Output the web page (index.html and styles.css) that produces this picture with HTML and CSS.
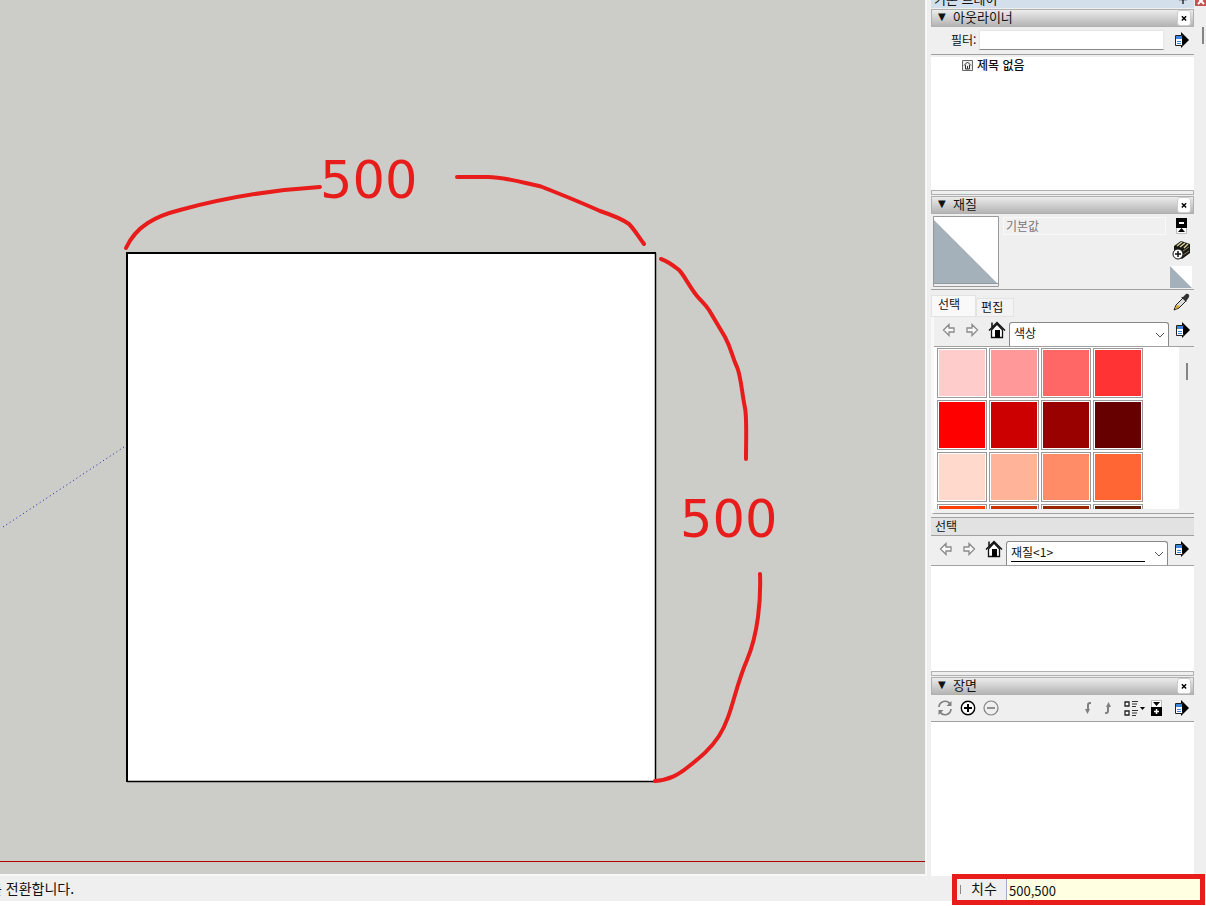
FILE: index.html
```html
<!DOCTYPE html>
<html lang="ko">
<head>
  <meta charset="UTF-8">
  <title>제목 없음</title>
  <meta name="viewport" content="width=device-width, initial-scale=1">
  <link rel="stylesheet" href="styles.css">
</head>
<body>
  <!-- Shared icons -->
  <svg class="defs" width="0" height="0" aria-hidden="true">
    <symbol id="i-menu" viewBox="0 0 15 16">
      <path d="M7 0v16l8-8z" fill="#000"/>
      <path d="M1.500 3.500h7v10h-7z" fill="#fff" stroke="#222"/>
      <path d="M2 4h6v3H2z" fill="#3d84dc"/>
      <path d="M3 9.500h4M3 11.500h4" stroke="#3d84dc"/>
      <path d="M8 4h3v8H8z" fill="#000"/>
    </symbol>
    <symbol id="i-back" viewBox="0 0 14 14">
      <path d="M1.500 7L7 1.500V5h5v4H7v3.500z" fill="#fafafa" stroke="#8a8a8a" stroke-width="1.300"/>
    </symbol>
    <symbol id="i-next" viewBox="0 0 14 14">
      <path d="M12.500 7L7 1.500V5H2v4h5v3.500z" fill="#fafafa" stroke="#8a8a8a" stroke-width="1.300"/>
    </symbol>
    <symbol id="i-home" viewBox="0 0 18 18">
      <path d="M3.500 9v7.500h11V9L9 3z" fill="#fff" stroke="#111" stroke-width="1.300"/>
      <path d="M1 9.500L9 1.500l8 8M4 6V1.500" fill="none" stroke="#111" stroke-width="1.500"/>
      <path d="M7 9h5v8H7z" fill="#000"/>
    </symbol>
    <symbol id="i-close" viewBox="0 0 14 14">
      <path d="M4.500 5l5 5M9.500 5l-5 5" stroke="#000" stroke-width="1.700"/>
    </symbol>
    <symbol id="i-down" viewBox="0 0 10 6">
      <path d="M1 1l4 4 4-4" fill="none" stroke="#555"/>
    </symbol>
  </svg>

  <div class="app">
    <!-- Modelling area -->
    <main class="viewport">
      <svg class="scene" viewBox="0 0 925 874" preserveAspectRatio="xMinYMin meet">
        <path class="red-axis" d="M0 861.500H925"/>
        <path class="blue-axis" d="M3 527L124 447"/>
        <path d="M127 253H655V781H127z" fill="#fff"/>
        <path class="edge" d="M127 782V253H656"/>
        <path class="edge thin" d="M655.500 253V781.500H127"/>
        <g class="pen">
          <path d="M126 248C136 226 156 216 180 210C224 198 270 190 320 187"/>
          <path d="M457 177H488C505 177 520 182 541 186.500C560 194 580 202 600 211C612 215 622 219 629 224C634 229 638 236 644 244"/>
          <path d="M661 259C667 261 674 266 679 270C684 275 689 286 697 296C702 302 705 304 709 310L725 337C732 350 732 357 737 367C741 376 742 394 745 408C747 418 746 439 746 459"/>
          <path d="M760 574C761 600 758 634 747 660C734 690 732 716 719 736C710 750 698 759 688 767C678 775 669 780 655 781"/>
        </g>
        <g class="note">
          <text x="320" y="198">500</text>
          <text x="680" y="537">500</text>
        </g>
      </svg>
    </main>

    <!-- Default tray -->
    <aside class="tray">
      <div class="tray-title">
        <span>기본 트레이</span>
        <svg width="8" height="12" viewBox="0 0 8 12"><path d="M2 1h4v6M2 1v6M0 7.500h8M4 8v4M5.500 1v6" fill="none" stroke="#111" stroke-width="1.300"/></svg>
      </div>

      <section class="outliner">
        <h2 class="bar"><span class="tri">▼</span>아웃라이너
          <button class="close" aria-label="닫기"><svg width="14" height="14"><use href="#i-close"/></svg></button></h2>
        <div class="filter">
          <label for="filter">필터:</label>
          <input id="filter" type="text">
          <button class="icon" aria-label="세부 정보"><svg width="15" height="16"><use href="#i-menu"/></svg></button>
        </div>
        <div class="tree">
          <svg width="11" height="11" viewBox="0 0 11 11"><path d="M.5.5h10v10H.500z" fill="#eee" stroke="#666"/><path d="M2 5.500L5.500 2 9 5.500M3.500 5v4h4V5" fill="none" stroke="#333"/><path d="M5 6h1v3H5z" fill="#333"/></svg>
          <b>제목 없음</b>
        </div>
      </section>
      <div class="splitter"></div>

      <section class="materials">
        <h2 class="bar"><span class="tri">▼</span>재질
          <button class="close" aria-label="닫기"><svg width="14" height="14"><use href="#i-close"/></svg></button></h2>
        <div class="current">
          <svg class="preview" width="66" height="71" viewBox="0 0 66 71"><path d="M.5.500h65v70H.500z" fill="#efefef" stroke="#999"/><path d="M1 1h64v66H1z" fill="#fff"/><path d="M1 4L64 67H1z" fill="#a5b1ba"/><path d="M1 67.500h64" stroke="#8d989f"/></svg>
          <input class="name" type="text" value="기본값" aria-label="재질 이름" disabled>
          <div class="side">
            <button class="icon" aria-label="보조 창 표시"><svg width="11" height="16" viewBox="0 0 11 16"><path d="M.5.500h10v15H.500z" fill="#fff" stroke="#bbb"/><path d="M0 0h11v10H0z"/><path d="M3 4h5v2H3z" fill="#fff"/><path d="M2 14l3.500-4L9 14z"/></svg></button>
            <button class="icon" aria-label="재질 만들기"><svg width="19" height="20" viewBox="0 0 19 20"><path d="M2 6l7-5 9 3v9l-8 6-8-4z" fill="#191912"/><path d="M5 6l5-4M8 7l5-4M12 8l4-4" stroke="#d8d2a0" stroke-width="1.500"/><path d="M11 11l6-4M11 15l6-4" stroke="#827c62"/><circle cx="6" cy="14" r="5" fill="#fff" stroke="#111"/><path d="M3 14h6M6 11v6" stroke="#111" stroke-width="1.500"/></svg></button>
            <button class="icon" aria-label="기본 재질"><svg width="22" height="22" viewBox="0 0 22 22"><path d="M0 0h22v22H0z" fill="#fff"/><path d="M0 0l22 22H0z" fill="#a5b1ba"/></svg></button>
          </div>
        </div>
        <div class="tabs">
          <button class="tab active">선택</button>
          <button class="tab">편집</button>
          <button class="icon dropper" aria-label="샘플 페인트"><svg width="17" height="18" viewBox="0 0 17 18"><path d="M1 17l2-5 7-7 3 3-7 7z" fill="#ddd" stroke="#222"/><path d="M2 16l2-4 3 1-2 2z" fill="#d8a628"/><path d="M8 4l5 5 1-2 2-3c1-2-1-4-3-3l-3 3z" fill="#333"/></svg></button>
        </div>
        <div class="picker">
          <div class="tools">
            <button class="icon" aria-label="뒤로"><svg width="14" height="14"><use href="#i-back"/></svg></button>
            <button class="icon" aria-label="앞으로"><svg width="14" height="14"><use href="#i-next"/></svg></button>
            <button class="icon" aria-label="모델 내"><svg width="18" height="18"><use href="#i-home"/></svg></button>
            <div class="combo">
              <select aria-label="재질 모음"><option>색상</option></select>
              <svg width="10" height="6"><use href="#i-down"/></svg>
            </div>
            <button class="icon" aria-label="세부 정보"><svg width="15" height="16"><use href="#i-menu"/></svg></button>
          </div>
          <div class="swatches">
            <div class="grid" id="grid"></div>
            <div class="scroll"></div>
          </div>
        </div>
        <h3 class="sub">선택</h3>
        <div class="tools second">
          <button class="icon" aria-label="뒤로"><svg width="14" height="14"><use href="#i-back"/></svg></button>
          <button class="icon" aria-label="앞으로"><svg width="14" height="14"><use href="#i-next"/></svg></button>
          <button class="icon" aria-label="모델 내"><svg width="18" height="18"><use href="#i-home"/></svg></button>
          <div class="combo editable">
            <select aria-label="보조 재질 모음"><option>재질&lt;1&gt;</option></select>
            <svg width="10" height="6"><use href="#i-down"/></svg>
          </div>
          <button class="icon" aria-label="세부 정보"><svg width="15" height="16"><use href="#i-menu"/></svg></button>
        </div>
        <div class="blank"></div>
      </section>
      <div class="splitter"></div>

      <section class="scenes">
        <h2 class="bar"><span class="tri">▼</span>장면
          <button class="close" aria-label="닫기"><svg width="14" height="14"><use href="#i-close"/></svg></button></h2>
        <div class="scene-tools">
          <button class="icon" aria-label="장면 업데이트"><svg width="16" height="16" viewBox="0 0 16 16"><path d="M2 7a6 6 0 0 1 11-3M14 9a6 6 0 0 1-11 3" fill="none" stroke="#808080" stroke-width="1.700"/><path d="M14.500 1v5h-5zM1.500 15v-5h5z" fill="#808080"/></svg></button>
          <button class="icon" aria-label="장면 추가"><svg width="16" height="16" viewBox="0 0 16 16"><circle cx="8" cy="8" r="6.700" fill="#fff" stroke="#000" stroke-width="1.400"/><path d="M4 8h8M8 4v8" stroke="#000" stroke-width="2"/></svg></button>
          <button class="icon" aria-label="장면 제거"><svg width="16" height="16" viewBox="0 0 16 16"><circle cx="8" cy="8" r="7" fill="none" stroke="#808080" stroke-width="1.200"/><path d="M4 8h8" stroke="#808080" stroke-width="1.700"/></svg></button>
          <div class="group">
            <button class="icon" aria-label="장면 아래로"><svg width="8" height="12" viewBox="0 0 8 12"><path d="M7 1H6Q4 1 4 3v6" fill="none" stroke="#808080" stroke-width="2"/><path d="M1 7h5l-2.500 5z" fill="#808080"/></svg></button>
            <button class="icon" aria-label="장면 위로"><svg width="8" height="12" viewBox="0 0 8 12"><path d="M1 11h1q2 0 2-2V3" fill="none" stroke="#808080" stroke-width="2"/><path d="M2 5h5L4.500 0z" fill="#808080"/></svg></button>
            <div class="options">
              <button class="icon" aria-label="보기 옵션"><svg width="21" height="16" viewBox="0 0 21 16"><path d="M1 2h4v4H1zM1 11h4v4H1z" fill="#fff" stroke="#222" stroke-width="1.300"/><path d="M8 1.500h6M8 4h5M8 6.500h4M8 10.500h6M8 13h5M8 15.500h4" stroke="#333" stroke-width="1.200"/><path d="M16 7h5l-2.500 3z"/></svg></button>
              <button class="icon" aria-label="세부 정보 표시"><svg width="11" height="16" viewBox="0 0 11 16"><path d="M.5.500h10v15H.500z" fill="#fff" stroke="#bbb"/><path d="M2 2h7L5.500 6z"/><path d="M0 7h11v9H0z"/><path d="M3 11.500h5M5.500 9v5" stroke="#fff" stroke-width="1.500"/></svg></button>
            </div>
            <button class="icon" aria-label="메뉴"><svg width="15" height="16"><use href="#i-menu"/></svg></button>
          </div>
        </div>
        <div class="scene-list"></div>
      </section>
    </aside>

    <!-- Outer scroll strip -->
    <div class="rail">
      <div class="corner"><svg width="11" height="6" viewBox="0 0 11 6"><path d="M3 -2l6 6M9 -2l-6 6" stroke="#fff" stroke-width="2"/></svg></div>
    </div>
  </div>

  <footer class="status">
    <p>를 전환합니다.</p>
    <div class="measure">
      <label for="dims">치수</label>
      <input id="dims" type="text" value="500,500">
    </div>
  </footer>

  <script>
    // colour library
    var colors = [
      '#ffcccc', '#ff9999', '#ff6666', '#ff3333',
      '#ff0000', '#cc0000', '#990000', '#660000',
      '#ffd9cc', '#ffb399', '#ff8c66', '#ff6633',
      '#ff4000', '#cc3300', '#992600', '#661a00'
    ];
    var grid = document.getElementById('grid');
    colors.forEach(function(c) {
      var b = document.createElement('button');
      b.className = 'swatch';
      b.setAttribute('aria-label', c);
      b.style.backgroundColor = c;
      grid.appendChild(b);
    });
  </script>
</body>
</html>
```
FILE: styles.css
```css
* {
  box-sizing: border-box;
}
body {
  margin: 0;
  min-height: 100vh;
  display: flex;
  flex-direction: column;
  padding-bottom: 5px;
  background: #fff;
  color: #111;
  font-family: "Noto Sans CJK KR", sans-serif;
  font-size: 12px;
  line-height: 16px;
  overflow: hidden;
}
button, input, select {
  font: inherit;
  color: inherit;
  margin: 0;
  padding: 0;
  border: 0;
}
button {
  background: none;
}
svg {
  display: block;
}
.defs {
  position: absolute;
}
.app {
  flex: 1;
  display: flex;
  background: #efefef;
}

/* Viewport */
.viewport {
  flex: 1;
  min-width: 0;
  position: relative;
  background: #cccdc8;
  border-right: 2px solid #f8f8f8;
  border-bottom: 2px solid #f8f8f8;
}
.scene {
  position: absolute;
  width: 100%;
  height: 100%;
}
.red-axis {
  stroke: #b00000;
}
.blue-axis {
  stroke: #1c1cb0;
  stroke-dasharray: 1 3;
}
.edge {
  fill: none;
  stroke: #000;
  stroke-width: 2;
}
.edge.thin {
  stroke-width: 1.5;
}
.pen path {
  fill: none;
  stroke: #e91c1c;
  stroke-width: 4;
  stroke-linecap: round;
  stroke-linejoin: round;
}
.note {
  font-family: "DejaVu Sans", sans-serif;
  font-size: 51px;
  fill: #e91c1c;
}

/* Tray */
.tray {
  width: 263px;
  margin-left: 4px;
  display: flex;
  flex-direction: column;
}
.tray-title {
  height: 8px;
  margin-bottom: 1px;
  padding: 0 7px 1px 3px;
  display: flex;
  justify-content: space-between;
  align-items: flex-end;
  overflow: hidden;
  background: #d3e0ec;
  font-size: 13px;
}
.tray-title svg {
  margin-bottom: 3px;
}
.bar {
  display: flex;
  align-items: center;
  height: 18px;
  margin: 0;
  padding: 0 2px 2px 6px;
  border: 1px solid #b0b0b0;
  background: linear-gradient(#ececec, #b4b4b4);
  font-size: 13px;
  font-weight: normal;
}
.tri {
  width: 15px;
  font-family: "DejaVu Sans", sans-serif;
  font-size: 10px;
}
.close {
  margin: 2px 0 0 auto;
  background: #fff;
  border: 1px solid #ccc;
  border-radius: 3px;
}
.close svg {
  width: 12px;
}
.splitter {
  height: 5px;
  margin-bottom: 1px;
  border: 1px solid #b0b0b0;
}
.filter {
  display: flex;
  align-items: center;
  height: 28px;
  padding: 0 5px 2px 20px;
  border-bottom: 1px solid #a0a0a0;
}
.filter input {
  flex: 1;
  min-width: 0;
  height: 20px;
  margin: 0 10px 0 3px;
  background: #fff;
  border: 1px solid #e5e5e5;
  border-bottom-color: #888;
}
.tree {
  display: flex;
  gap: 4px;
  height: 133px;
  margin-top: 2px;
  padding: 0 0 0 31px;
  background: #fff;
}
.tree svg {
  margin-top: 3px;
}
.tree b {
  font-weight: 500;
}

/* Materials */
.current {
  display: flex;
  height: 76px;
  padding: 2px 2px 0;
  border-bottom: 1px solid #a0a0a0;
}
.name {
  flex: 1;
  min-width: 0;
  height: 18px;
  margin: 1px 4px 0;
  padding: 0 2px 2px;
  background: #f0f0f0;
  border: 1px solid #f9f9f9;
  color: #777;
}
.side {
  display: flex;
  flex-direction: column;
  align-items: center;
  gap: 6px;
  padding-top: 2px;
}
.tabs {
  display: flex;
  align-items: flex-end;
  height: 27px;
}
.tab {
  height: 19px;
  padding: 0 10px 4px 4px;
  border: 1px solid #e3e3e3;
  background: #f3f3f3;
}
.tab.active {
  height: 22px;
  padding: 0 15px 4px 6px;
  background: #f9f9f9;
}
.dropper {
  margin: 0 4px 6px auto;
}
.picker {
  border-left: 3px solid #f8f8f8;
  border-bottom: 1px solid #a0a0a0;
  padding-bottom: 4px;
}
.tools {
  display: flex;
  align-items: center;
  gap: 9px;
  height: 30px;
  padding: 0 4px 3px 8px;
  border-bottom: 1px solid #a0a0a0;
}
.combo {
  position: relative;
  flex: 1;
  align-self: flex-end;
  height: 24px;
  margin: 0 -3px -3px -6px;
}
.combo select {
  appearance: none;
  width: 100%;
  height: 24px;
  padding: 0 4px 4px;
  background: #fff;
  border: 1px solid #888;
  border-bottom: 0;
  border-radius: 3px 3px 0 0;
}
.combo svg {
  position: absolute;
  right: 4px;
  bottom: 8px;
}
.editable::after {
  content: "";
  position: absolute;
  left: 5px;
  right: 23px;
  bottom: 3px;
  border-bottom: 1px solid #000;
}
.swatches {
  display: flex;
  justify-content: space-between;
  height: 162px;
  overflow: hidden;
  background: #fff;
}
.grid {
  display: grid;
  grid-template-columns: repeat(4, 50px);
  grid-auto-rows: 50px;
  gap: 2px;
  padding: 1px 3px;
}
.swatch {
  border: 1px solid #999;
  box-shadow: inset 0 0 0 1px #fff;
}
.scroll {
  width: 15px;
  padding: 16px 7px;
  background: #efefef;
}
.scroll::before {
  content: "";
  display: block;
  width: 2px;
  height: 17px;
  background: #858585;
}
.sub {
  height: 19px;
  margin: 3px 0 0;
  padding-left: 4px;
  background: #e2e2e2;
  border: solid #a0a0a0;
  border-width: 1px 0;
  font-size: 12px;
  font-weight: normal;
}
.tools.second {
  padding-right: 5px;
}
.blank {
  height: 105px;
  background: #fff;
}

/* Scenes */
.scenes {
  flex: 1;
  display: flex;
  flex-direction: column;
}
.scene-tools {
  display: flex;
  align-items: center;
  gap: 7px;
  height: 27px;
  padding: 0 5px 0 6px;
  border-bottom: 1px solid #a0a0a0;
}
.group {
  display: flex;
  align-items: center;
  gap: 12px;
  margin-left: auto;
}
.options {
  display: flex;
  gap: 6px;
}
.scene-list {
  flex: 1;
  background: #fff;
}
.rail {
  width: 12px;
}
.corner {
  height: 6px;
  margin: 0 0 21px 1px;
  background: #c75050;
}
.rail::after {
  content: "";
  display: block;
  width: 2px;
  height: 17px;
  margin-left: 8px;
  background: #858585;
}

/* Status bar */
.status {
  position: relative;
  display: flex;
  align-items: center;
  height: 25px;
  padding-bottom: 2px;
  background: #efefef;
  font-size: 14px;
}
.status p {
  margin: 0 0 0 -11px;
}
.measure {
  position: absolute;
  right: 1px;
  top: -2px;
  display: flex;
  width: 253px;
  height: 31px;
  border: 5px solid #e91c1c;
  background: #efefef;
}
.measure label {
  width: 49px;
  padding: 1px 0 0 14px;
}
.measure label::before {
  content: "";
  position: absolute;
  left: 3px;
  top: 6px;
  height: 9px;
  border-left: 1px solid #888;
}
.measure input {
  flex: 1;
  min-width: 0;
  padding: 3px 2px 0;
  background: #ffffe1;
  border-left: 1px solid #a0b0c8;
  font-size: 13px;
}
```
